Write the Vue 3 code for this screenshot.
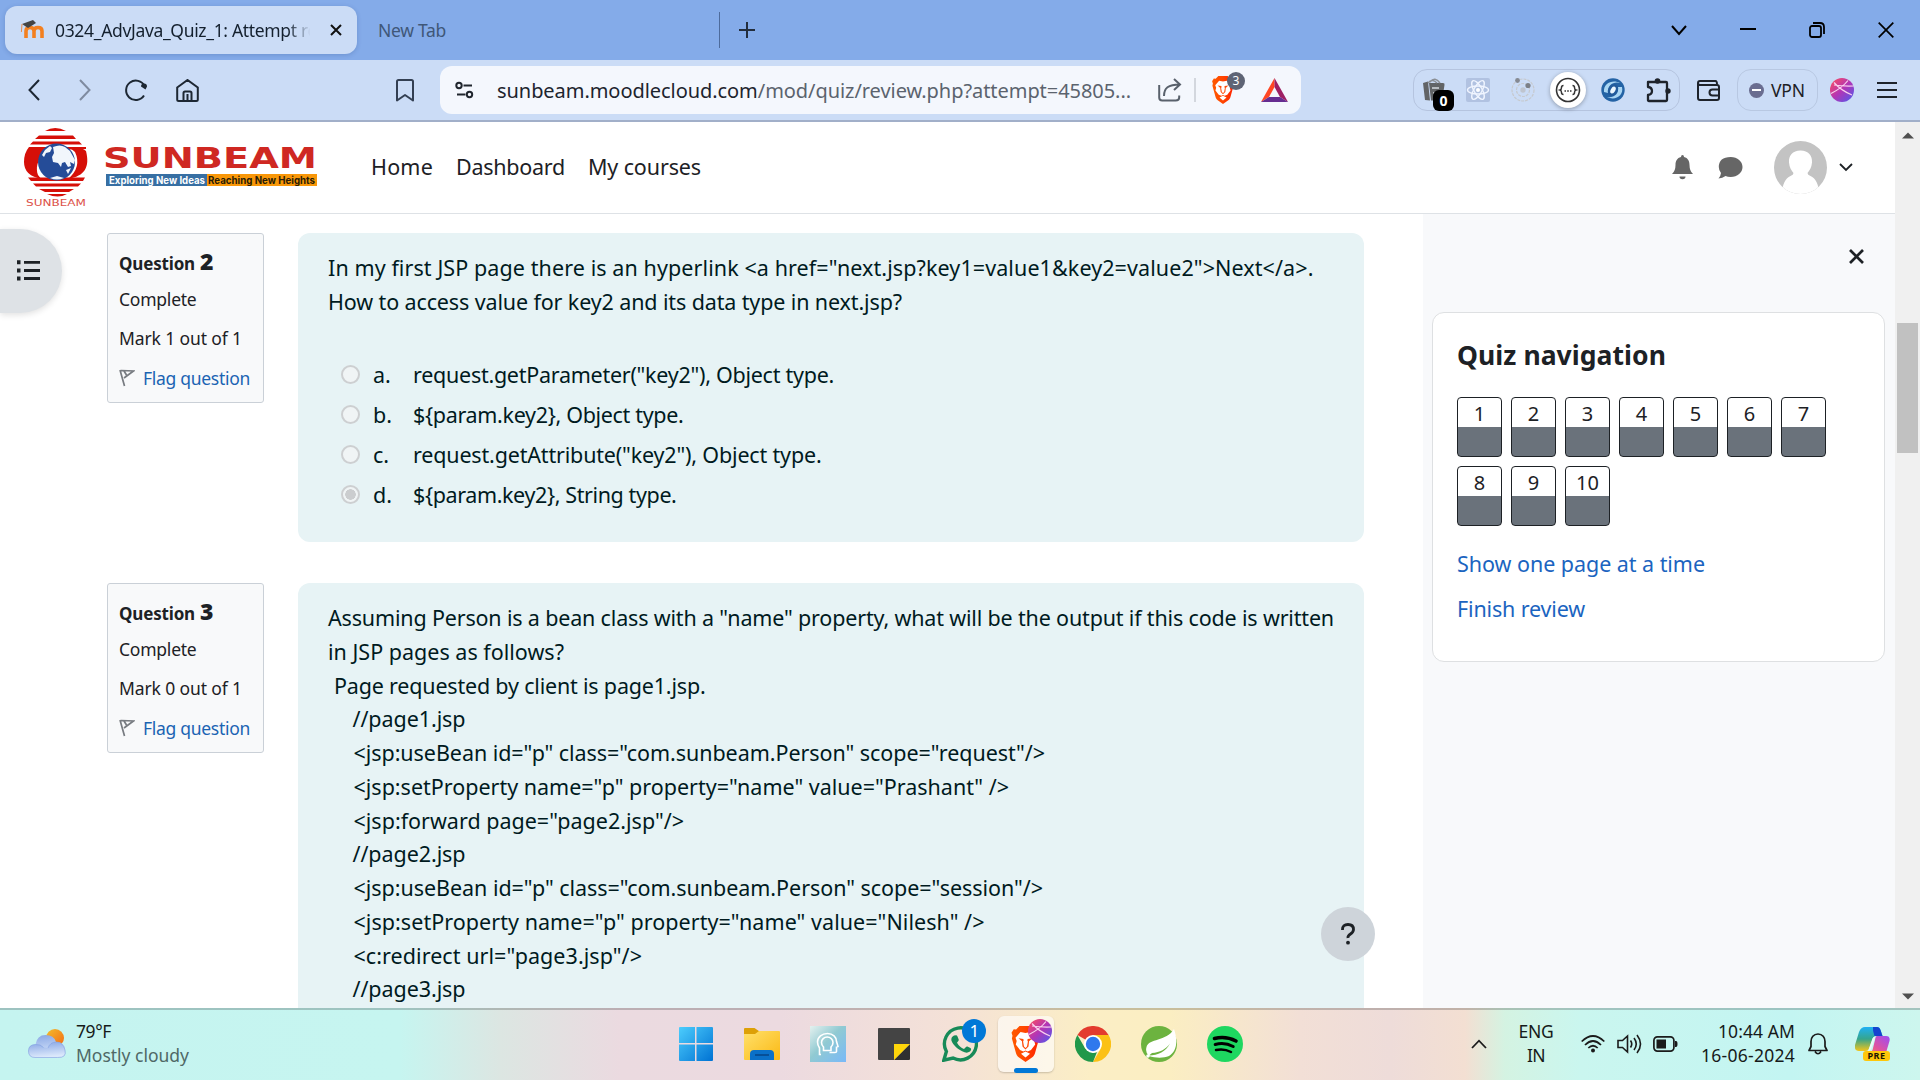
<script setup>
const vFit = {
  mounted(el, { value }) {
    const natural = el.getBoundingClientRect().width
    el.style.letterSpacing = (value - natural) / el.textContent.length + 'px'
  },
}

const questions = [
  {
    number: 2,
    mark: 'Mark 1 out of 1',
    lines: [
      { text: 'In my first JSP page there is an hyperlink <a href="next.jsp?key1=value1&key2=value2">Next</a>.', width: 985.5, indent: 0 },
      { text: 'How to access value for key2 and its data type in next.jsp?', width: 574, indent: 0 },
    ],
    options: [
      { letter: 'a.', text: 'request.getParameter("key2"), Object type.', width: 421 },
      { letter: 'b.', text: '${param.key2}, Object type.', width: 270.5 },
      { letter: 'c.', text: 'request.getAttribute("key2"), Object type.', width: 408.5 },
      { letter: 'd.', text: '${param.key2}, String type.', width: 263.5, checked: true },
    ],
  },
  {
    number: 3,
    mark: 'Mark 0 out of 1',
    lines: [
      { text: 'Assuming Person is a bean class with a "name" property, what will be the output if this code is written', width: 1006, indent: 0 },
      { text: 'in JSP pages as follows?', width: 236, indent: 0 },
      { text: 'Page requested by client is page1.jsp.', width: 371.5, indent: 6 },
      { text: '//page1.jsp', width: 113, indent: 24.5 },
      { text: '<jsp:useBean id="p" class="com.sunbeam.Person" scope="request"/>', width: 691.5, indent: 25.5 },
      { text: '<jsp:setProperty name="p" property="name" value="Prashant" />', width: 655.5, indent: 25.5 },
      { text: '<jsp:forward page="page2.jsp"/>', width: 330.5, indent: 25.5 },
      { text: '//page2.jsp', width: 113, indent: 24.5 },
      { text: '<jsp:useBean id="p" class="com.sunbeam.Person" scope="session"/>', width: 689.5, indent: 25.5 },
      { text: '<jsp:setProperty name="p" property="name" value="Nilesh" />', width: 631, indent: 25.5 },
      { text: '<c:redirect url="page3.jsp"/>', width: 288.5, indent: 25.5 },
      { text: '//page3.jsp', width: 113, indent: 24.5 },
    ],
    options: [],
  },
]
</script>

<template>
  <div class="screen">
    <svg class="defs" width="0" height="0">
      <defs>
        <linearGradient id="gBrave" x1="0" x2="1"><stop offset="0" stop-color="#ff5a00" /><stop offset=".5" stop-color="#ff4500" /><stop offset="1" stop-color="#ff2000" /></linearGradient>
        <linearGradient id="gSphere" x1="0" y1="0" x2="1" y2="1"><stop offset=".1" stop-color="#f24a6a" /><stop offset=".5" stop-color="#b335b5" /><stop offset="1" stop-color="#4a5cf0" /></linearGradient>
        <symbol id="brave" viewBox="0 0 28 36">
          <path d="M8 0h12l3.4 3.6 2.4-.4 2.2 3.6-1 3 .6 2.6-4.2 15.2c-.5 1.600-1.300 2.700-2.600 3.600L14 36l-6.800-4.800c-1.300-.9-2.100-2-2.600-3.600L.4 12.400 1 9.800l-1-3 2.200-3.600 2.400.4z" fill="url(#gBrave)" />
          <path d="M14 7l5-1 5 5.800-1.200 3.200.9 3.500-4.200 5.500-3.300 1.500L14 24.500l-2.200 1-3.300-1.500-4.200-5.500.9-3.500L4 11.800 9 6z" fill="#fff" />
          <path d="M14 25.500l4.500 2.200L14 31.500l-4.500-3.800z" fill="#fff" />
          <path d="M7 12.200l4.800.8.400 1.200-.6 1.300.9 5L14 22l1.500-1.500.9-5-.6-1.300.4-1.200 4.800-.8-3.200 2.800h-.2l-.6 5.500L14 23.500l-3-3-.6-5.500h-.2z" fill="#ff4a08" />
        </symbol>
        <symbol id="sphere" viewBox="0 0 24 24">
          <circle cx="12" cy="12" r="12" fill="url(#gSphere)" />
          <path d="M4 4.500q7 8 18 12.500M1 15.500Q12 10 18 2.500M4 7q10 1.500 19.500 1" fill="none" stroke="#f9cfee" stroke-width="1.200" />
        </symbol>
      </defs>
    </svg>

    <div class="tabs">
      <div class="tab">
        <svg class="favicon" width="25" height="20" viewBox="0 0 25 20"><path d="M6 18v-7q0-3.500 4-3.500t4 3.500v7M14 18v-7q0-3.500 4-3.500t4 3.500v7" fill="none" stroke="#f38020" stroke-width="3.600" /><path d="M2 4l11-4 3 3-8 5z" fill="#444" /><path d="M2 4l-.6 8" stroke="#e98b4a" /></svg>
        <div class="tab-title"><span v-fit="262">0324_AdvJava_Quiz_1: Attempt re</span></div>
        <svg class="tab-close" width="12" height="12" viewBox="0 0 12 12"><path d="M1 1l10 10M11 1L1 11" stroke="#111" stroke-width="2" /></svg>
      </div>
      <div class="tab-idle"><span v-fit="68">New Tab</span></div>
      <i class="tab-rule"></i>
      <svg class="plus" width="16" height="16" viewBox="0 0 16 16"><path d="M8 0v16M0 8h16" stroke="#222d3d" stroke-width="2" /></svg>
      <div class="win">
        <svg width="16" height="16" viewBox="0 0 16 16"><path d="M1 4l7 8 7-8" fill="none" stroke="#000" stroke-width="2" /></svg>
        <svg width="16" height="16" viewBox="0 0 16 16"><path d="M0 7h16" stroke="#000" stroke-width="2" /></svg>
        <svg width="16" height="16" viewBox="0 0 16 16"><rect x="1" y="4" width="11" height="11" rx="2" fill="none" stroke="#000" stroke-width="1.800" /><path d="M4 1h7q4 0 4 4v7" fill="none" stroke="#000" stroke-width="1.800" /></svg>
        <svg width="16" height="16" viewBox="0 0 16 16"><path d="M.7.7l14.600 14.600M15.300.7L.7 15.300" stroke="#000" stroke-width="1.700" /></svg>
      </div>
    </div>

    <div class="toolbar">
      <svg class="back" width="12" height="22" viewBox="0 0 12 22"><path d="M11 1L1.500 11 11 21" fill="none" stroke="#1d2733" stroke-width="2" /></svg>
      <svg class="fwd" width="12" height="22" viewBox="0 0 12 22"><path d="M1 1l9.500 10L1 21" fill="none" stroke="#7f8ba0" stroke-width="2" /></svg>
      <svg class="reload" width="24" height="24" viewBox="0 0 24 24"><path d="M20 17.500A9.700 9.700 0 1 1 20.500 8" fill="none" stroke="#1d2733" stroke-width="2" /><path d="M17 8.500a3 3 0 1 1 6 0l-1.500 3z" fill="#1d2733" /></svg>
      <svg class="home" width="23" height="23" viewBox="0 0 23 23"><path d="M1.200 8.500L11.500 1l10.300 7.500v12q0 1.500-1.500 1.500h-17.600q-1.500 0-1.500-1.500zM7.500 22v-8q0-1.500 1.500-1.500h5q1.500 0 1.500 1.500v8M11.500 15v6" fill="none" stroke="#1d2733" stroke-width="2" /></svg>
      <svg class="mark" width="18" height="23" viewBox="0 0 18 23"><path d="M1 2.500Q1 1 2.500 1h13Q17 1 17 2.500V21.500l-8-5.500-8 5.500z" fill="none" stroke="#333f52" stroke-width="2" stroke-linejoin="round" /></svg>
      <div class="url">
        <svg class="site" width="19" height="18" viewBox="0 0 19 18"><g fill="none" stroke="#20262e" stroke-width="2"><circle cx="4" cy="4.500" r="2.700" /><path d="M8.500 4.500H17M2 13.500h8.500" /><circle cx="14.500" cy="13.500" r="2.700" /></g></svg>
        <div class="address"><span v-fit="634">sunbeam.moodlecloud.com<em>/mod/quiz/review.php?attempt=45805...</em></span></div>
        <svg class="share" width="24" height="24" viewBox="0 0 24 24"><path d="M1.200 7v12.500q0 3 3 3h13.500q3.500 0 3.500-3V17.500M6 18C6 10 10 6.500 22 6.500M16 1l6 5.500-6 5.500" fill="none" stroke="#59616c" stroke-width="2" /></svg>
        <i class="url-rule"></i>
        <div class="shield"><svg width="22" height="28"><use href="#brave" /></svg><b>3</b></div>
        <svg class="bat" width="27" height="24" viewBox="0 0 27 24"><path d="M13.500 0L0 24l8-5 5.500-10z" fill="#ff4724" /><path d="M13.500 0L27 24l-8-5-5.500-10z" fill="#9e1f63" /><path d="M0 24h27l-8-5H8z" fill="#662d91" /></svg>
      </div>
      <div class="exts">
        <div class="bag"><svg width="24" height="25" viewBox="0 0 24 25"><path d="M1 5l5-1.500 2 19L3 22zM7 5h14q2 0 1.500 2L20 22.500H9z" fill="#626466" /><path d="M6 5q4-5 9 0M8 4q5-6 10 1" fill="none" stroke="#8b8f94" stroke-width="1.500" /><path d="M10 10h7M11 15h6" stroke="#b8bcc0" stroke-width="2" /></svg><b>0</b></div>
        <svg width="24" height="24" viewBox="0 0 24 24"><rect width="24" height="24" rx="2" fill="#b1c2e1" /><g fill="none" stroke="#f0f5ff" stroke-width="1.400"><ellipse cx="12" cy="12" rx="10.500" ry="4" /><ellipse cx="12" cy="12" rx="10.500" ry="4" transform="rotate(60 12 12)" /><ellipse cx="12" cy="12" rx="10.500" ry="4" transform="rotate(120 12 12)" /></g><circle cx="12" cy="12" r="2" fill="#fff" /></svg>
        <svg width="24" height="24" viewBox="0 0 24 24"><g fill="none" stroke="#c6c9ce" stroke-width="1.200" stroke-dasharray="3 1"><circle cx="12" cy="12" r="11" /><circle cx="12" cy="12" r="6.500" /></g><circle cx="12" cy="12" r="2.700" fill="#bfc5cf" /><circle cx="6.500" cy="2.500" r="2.400" fill="#858991" /><circle cx="17" cy="7.500" r="2.600" fill="#7c8087" /></svg>
        <div class="json"><svg width="26" height="26" viewBox="0 0 26 26"><circle cx="13" cy="13" r="11.500" fill="none" stroke="#333" stroke-width="1.600" /><path d="M8.500 8.500q-2 0-2 2t-1.500 2.500q1.500.5 1.500 2.500t2 2M17.500 8.500q2 0 2 2t1.500 2.500q-1.500.5-1.500 2.500t-2 2" fill="none" stroke="#333" stroke-width="1.500" /><path d="M9.500 14H11M12.200 14h1.600M15 14h1.500" stroke="#333" stroke-width="1.300" /></svg></div>
        <svg width="24" height="24" viewBox="0 0 24 24"><circle cx="12" cy="12" r="11.700" fill="#2463a5" /><path d="M3 14C2 5 12 1 19 5 13 3 6 7 7 15M21 9c2 9-7 14-15 10 7 1 12-3 11-10" fill="#a9d6f3" /><ellipse cx="12" cy="12" rx="3.500" ry="5" fill="#eaf6fd" stroke="#225b9b" stroke-width="2.500" transform="rotate(30 12 12)" /></svg>
        <svg width="25" height="25" viewBox="0 0 25 25"><path d="M2 4h18q1 0 1 1v17q0 1-1 1H3q-1 0-1-1v-5q4-.5 4-4T2 9z" fill="none" stroke="#1e232b" stroke-width="2.300" stroke-linejoin="round" /><circle cx="11.500" cy="3" r="2.800" fill="#1e232b" /><circle cx="22" cy="13" r="2.700" fill="#1e232b" /></svg>
      </div>
      <svg class="wallet" width="24" height="21" viewBox="0 0 24 21"><g fill="none" stroke="#1e232b" stroke-width="2"><path d="M1 3q0-2 2-2h15.500q1.500 0 1.500 3.500M1 3q0 2 2 2h17q2 0 2 2v11q0 2-2 2H3q-2 0-2-2z" /><path d="M22 9.500h-6.500q-3 0-3 3t3 3H22" /></g></svg>
      <div class="vpn"><i></i><span v-fit="34">VPN</span></div>
      <svg class="ball" width="24" height="24"><use href="#sphere" /></svg>
      <svg class="menu" width="20" height="16" viewBox="0 0 20 16"><path d="M0 1h20M0 8h20M0 15h20" stroke="#1e232b" stroke-width="1.800" /></svg>
    </div>

    <div class="page">
      <div class="site-main">
        <header class="nav">
          <svg class="logo" width="300" height="84" viewBox="20 125 300 84">
            <g fill="#d60f08">
              <path d="M45 131q10-6 21 0zM39 135.500h34l3 3.500H35zM33 141.500h46l3 3H30z" />
              <path d="M29 147h57v2l-20 .5C47 147 33 159 38 175q2 3 4 4-18-3-18-17 0-9 5-15z" />
              <path d="M86 151C90 167 85 176 68 179q14-12 7-27-3-3-6-4 13-1 17 3z" />
              <path d="M28 177.500h57l-2 3.500H31zM33 183.500h48l-3 3H36zM39 189h35l-5 3H45zM47 194h20q-9 5-20 0z" />
            </g>
            <circle cx="56.500" cy="162" r="18.500" fill="#254c98" />
            <path d="M45 150l5-4 2 2-2 4-4 1-2 4-2-2zM53 147q7-3 12 0l5 4 5 9-1 4-4-2 1 4-3 1-3-5-3 1-1 4-3-4-5-1-1-5 2-4zM66 170l5-2-3 6zM50 178q7 3 14 0l-7-2z" fill="#f1f6fc" />
            <text x="26" y="206" font-size="9.500" textLength="60" lengthAdjust="spacingAndGlyphs" fill="#dc5148" font-family="'DejaVu Sans', sans-serif">SUNBEAM</text>
            <text x="103" y="168" font-size="29" font-weight="700" textLength="214" lengthAdjust="spacingAndGlyphs" fill="#cf2822" font-family="'DejaVu Sans', sans-serif">SUNBEAM</text>
            <rect x="106" y="174" width="101" height="12" fill="#376fa3" /><rect x="207" y="174" width="110" height="12" fill="#f99708" />
            <text x="109" y="183.500" font-size="10" font-weight="700" textLength="96" lengthAdjust="spacingAndGlyphs" fill="#fff" font-family="Inter, sans-serif">Exploring New Ideas</text>
            <text x="208" y="183.500" font-size="10" font-weight="700" textLength="107" lengthAdjust="spacingAndGlyphs" fill="#2a1c05" font-family="Inter, sans-serif">Reaching New Heights</text>
          </svg>
          <nav class="links">
            <a v-fit="62">Home</a>
            <a v-fit="109">Dashboard</a>
            <a v-fit="113">My courses</a>
          </nav>
          <svg class="bell" width="21" height="25" viewBox="0 0 21 25"><path d="M10.500 0q1.500 0 1.500 2c4 1 5.500 4 5.500 8q0 6 3.500 9H0q3.500-3 3.500-9c0-4 1.500-7 5.500-8q0-2 1.500-2zM7.500 21.500h6a3 2.700 0 0 1-6 0z" fill="#666" /></svg>
          <svg class="chat" width="25" height="22" viewBox="0 0 25 22"><path d="M12.700 0C19.500 0 24.500 4.500 24.500 10S19.500 20 12.700 20q-3 0-5.200-.9Q4.500 21.500.5 21.500 2.700 19 3 16 .8 13.500.8 10 .8 0 12.700 0z" fill="#666" /></svg>
          <svg class="avatar" width="53" height="53" viewBox="0 0 53 53"><clipPath id="cAvatar"><circle cx="26.500" cy="26.500" r="26.500" /></clipPath><g clip-path="url(#cAvatar)"><rect width="53" height="53" fill="#c3c3c3" /><path d="M26.500 9.500c8 0 12 5 11.500 12-.4 5-2.500 8-4.500 10.500q0 2 3 3c5 2 8 8 9 18H7.500c1-10 4-16 9-18q3-1 3-3C17.500 29.500 15.400 26.500 15 21.500c-.5-7 3.500-12 11.500-12z" fill="#fff" /></g></svg>
          <svg class="caret" width="14" height="9" viewBox="0 0 14 9"><path d="M1 1l6 6 6-6" fill="none" stroke="#1d2125" stroke-width="1.800" /></svg>
        </header>

        <div class="body">
          <div class="left">
            <div class="toggle">
              <svg width="23" height="21" viewBox="0 0 23 21"><path d="M7 2.300h16M7 10.500h16M7 18.500h16" stroke="#1d2125" stroke-width="2.800" /><path d="M0 2.300h3.500M0 10.500h3.500M0 18.500h3.500" stroke="#1d2125" stroke-width="4" /></svg>
            </div>
          </div>
          <main class="questions">
            <section v-for="q in questions" :key="q.number" class="question">
              <aside class="info">
                <h3><span v-fit="76">Question</span><b>{{ q.number }}</b></h3>
                <p class="state"><span v-fit="77.5">Complete</span></p>
                <p class="grade"><span v-fit="123">{{ q.mark }}</span></p>
                <p class="flag"><svg width="16" height="18" viewBox="0 0 16 18"><path d="M1 1l4.500 16M2 1.500l12.500.5-9.500 7M5 2l2.500 4" fill="none" stroke="#777b80" stroke-width="1.700" /></svg><span v-fit="107">Flag question</span></p>
              </aside>
              <article class="formulation" :class="{ tall: !q.options.length }">
                <div v-for="(l, i) in q.lines" :key="i" class="line" :style="{ paddingLeft: l.indent + 'px' }"><span v-fit="l.width">{{ l.text }}</span></div>
                <div v-if="q.options.length" class="options">
                  <div v-for="o in q.options" :key="o.letter" class="option">
                    <i class="radio" :class="{ on: o.checked }"></i><span class="letter">{{ o.letter }}</span><span v-fit="o.width">{{ o.text }}</span>
                  </div>
                </div>
              </article>
            </section>
          </main>
          <aside class="drawer">
            <svg class="close" width="15" height="15" viewBox="0 0 15 15"><path d="M1 1l13 13M14 1L1 14" stroke="#1d2125" stroke-width="2.700" /></svg>
            <div class="card">
              <h2><span v-fit="209">Quiz navigation</span></h2>
              <div class="cells"><a v-for="n in 10" :key="n" class="cell"><span>{{ n }}</span></a></div>
              <a class="link"><span v-fit="248">Show one page at a time</span></a>
              <a class="link"><span v-fit="128">Finish review</span></a>
            </div>
          </aside>
        </div>
      </div>
      <div class="scroll">
        <svg width="12" height="7" viewBox="0 0 12 7"><path d="M0 6.500L6 .5l6 6z" fill="#505050" /></svg>
        <i class="thumb"></i>
        <svg width="12" height="7" viewBox="0 0 12 7"><path d="M0 .5l6 6 6-6z" fill="#505050" /></svg>
      </div>
      <div class="help"><svg width="14" height="22" viewBox="0 0 14 22"><path d="M1.500 7V6.500Q1.500 1.500 7 1.500T12.500 6.500Q12.500 9 9.500 11T7 15" fill="none" stroke="#1d2125" stroke-width="2.800" /><circle cx="7" cy="19.700" r="1.900" fill="#1d2125" /></svg></div>
    </div>

    <footer class="taskbar">
      <div class="weather">
        <svg width="38" height="32" viewBox="0 0 38 32"><defs><linearGradient id="gSun" x1="0" y1="0" x2="1" y2="1"><stop offset="0" stop-color="#f3bd2c" /><stop offset="1" stop-color="#f36a16" /></linearGradient><linearGradient id="gCloud" x1="0" y1="0" x2=".2" y2="1"><stop offset="0" stop-color="#86a5e4" /><stop offset="1" stop-color="#dbe8fb" /></linearGradient></defs><circle cx="27" cy="10" r="9" fill="url(#gSun)" /><path d="M7 29.500q-6.500 0-6.500-6.500T7.500 16.500Q9 7 17.500 7T28 14q9 0 9 8t-7.500 7.500z" fill="url(#gCloud)" /><path d="M20 20q2-6 8.500-6T37 22t-7.500 7.500H7Q.5 29.500.5 23T7.500 16.500q5-.5 8 3" fill="url(#gCloud)" stroke="#7f9fe0" stroke-width=".6" /></svg>
        <div class="stack start"><span v-fit="35">79°F</span><span v-fit="113" class="dim">Mostly cloudy</span></div>
      </div>
      <div class="apps">
        <svg width="36" height="36" viewBox="0 0 36 36"><defs><linearGradient id="gWin" x1="0" y1="0" x2="1" y2="1" gradientUnits="objectBoundingBox"><stop offset="0" stop-color="#4ccdfd" /><stop offset="1" stop-color="#0072d3" /></linearGradient></defs><path d="M2 1h15v16H1V2q0-1 1-1zM18.500 1H34q1 0 1 1v15H18.500zM1 18.500h16V35H2q-1 0-1-1zM18.500 18.500H35V34q0 1-1 1H18.500z" fill="url(#gWin)" /></svg>
        <svg width="36" height="36" viewBox="0 0 36 36"><defs><linearGradient id="gFolder" x1="0" y1="0" x2="1" y2="1"><stop offset="0" stop-color="#ffe06b" /><stop offset="1" stop-color="#fbb914" /></linearGradient></defs><path d="M0 3q0-1 1-1h9.500l5 3.500v7H0z" fill="#dda007" /><path d="M0 8h11l4-3h20q1 0 1 1v27q0 1-1 1H1q-1 0-1-1z" fill="url(#gFolder)" /><path d="M6 34V28q0-4 4-4h16q4 0 4 4v6z" fill="#0a70c8" /><path d="M11 29h14" stroke="#064c91" stroke-width="1.800" /></svg>
        <svg width="36" height="36" viewBox="0 0 36 36"><defs><linearGradient id="gHead" x1="0" y1="0" x2="1" y2="1"><stop offset="0" stop-color="#e5f1ef" /><stop offset=".45" stop-color="#91cad2" /><stop offset="1" stop-color="#79b9f8" /></linearGradient></defs><path d="M0 0h36v36H0z" fill="url(#gHead)" /><path d="M11 28.500H9.500V22Q7.500 19 7.500 16C7.500 11 12 7.500 17.500 7.500S26.500 11 26.500 15.500l1.500 5-1.500.5v4.500q0 1-1.500 1h-5.500M13.500 24.500v-3.500Q11.500 19 11.500 16.500c0-3 2.500-5.500 5.700-5.500S23 13.500 23 16.500q0 2.500-2 4.500v3.500z" fill="none" stroke="#fff" stroke-width="1.600" /></svg>
        <svg width="36" height="36" viewBox="0 0 36 36"><path d="M3 2h30q1 0 1 1v15L18 34H3q-1 0-1-1V3q0-1 1-1z" fill="#444" /><path d="M18 34l16-16v15q0 1-1 1z" fill="#303030" /><path d="M18 18h16L18 34z" fill="#ffd60a" /></svg>
        <div class="wa"><svg width="36" height="36" viewBox="0 0 36 36"><path d="M1.800 34.200l2.600-8.700A16 16 0 1 1 11 32z" fill="none" stroke="#178a58" stroke-width="3.400" /><path d="M12 9.500l2-.2q1 0 1.500 1.200l1.200 3q.3.800-.4 1.500l-1.300 1.700q2.500 4.500 7 6.200l2-2q.6-.6 1.400-.3l3 1.500q1 .5.700 1.500c-.6 3-4 3.500-6.500 2.700C16 24 11 19 9.400 14.500q-.6-3.500 2.600-5z" fill="#178a58" /></svg><b>1</b></div>
        <div class="active"><svg class="lion" width="29" height="36"><use href="#brave" /></svg><svg class="orb" width="24" height="24"><use href="#sphere" /></svg><i></i></div>
        <svg width="36" height="36" viewBox="0 0 36 36"><path d="M18 18L2.400 9A18 18 0 0 1 33.600 9z" fill="#e33b2e" /><path d="M18 9h15.600A18 18 0 0 1 18 36l7.800-13.500z" fill="#fbc116" /><path d="M2.400 9l7.800 13.500L18 27l4-1-4 10A18 18 0 0 1 2.400 9z" fill="#21984a" /><circle cx="18" cy="18" r="9" fill="#fff" /><circle cx="18" cy="18" r="7.200" fill="#2f78ed" /></svg>
        <svg width="36" height="36" viewBox="0 0 36 36"><circle cx="18" cy="18" r="18" fill="#6cb33f" /><path d="M33 3c4 12 3 22-5 27-6 2.500-14 2-20 0Q4 27 5.500 21C8 12 25 16 33 3z" fill="#fff" /><path d="M8 29.500c9 0 17-4 21-12-4 5.500-10 9-18 9.500" fill="#6cb33f" /><circle cx="7" cy="30" r="1.800" fill="#fff" /></svg>
        <svg width="36" height="36" viewBox="0 0 36 36"><circle cx="18" cy="18" r="18" fill="#1ed760" /><g fill="none" stroke="#000" stroke-linecap="round"><path d="M7.500 12.500q11-3 21.500 2.500" stroke-width="3.600" /><path d="M8.200 18.500q9.500-2.500 18 2" stroke-width="3" /><path d="M9 24q8-1.800 15 2" stroke-width="2.500" /></g></svg>
      </div>
      <div class="tray">
        <svg width="16" height="10" viewBox="0 0 16 10"><path d="M1 9l7-7.300L15 9" fill="none" stroke="#1b1b1b" stroke-width="1.800" /></svg>
        <div class="stack lang"><span v-fit="35">ENG</span><span v-fit="18">IN</span></div>
        <svg class="wifi" width="24" height="18" viewBox="0 0 24 18"><g fill="none" stroke="#1b1b1b" stroke-width="1.700"><path d="M.7 6.500Q12-4.500 23.300 6.500M4 10q8-8 16 0M7.300 13q4.700-4.500 9.400 0" /></g><circle cx="12" cy="15.500" r="2" fill="#1b1b1b" /></svg>
        <svg class="vol" width="25" height="20" viewBox="0 0 25 20"><g fill="none" stroke="#1b1b1b" stroke-width="1.600"><path d="M1 6.500h4.500L10.500 2v16l-5-4.500H1zM13.500 6.500q2.500 3.500 0 7M17 4q4.500 6 0 12M20 1q7 9 0 18" /></g></svg>
        <svg class="batt" width="25" height="16" viewBox="0 0 25 16"><rect x=".9" y=".9" width="20" height="14.200" rx="3.500" fill="none" stroke="#1b1b1b" stroke-width="1.700" /><path d="M3.500 3.500H13v9H3.500zM22 5h1q1.500 0 1.500 3T23 11h-1z" fill="#1b1b1b" /></svg>
        <div class="stack clock"><span v-fit="77">10:44 AM</span><span v-fit="94">16-06-2024</span></div>
        <svg class="tbell" width="20" height="22" viewBox="0 0 20 22"><path d="M10 1c4.500 0 7 3.500 7 7.500v5l2 4H1l2-4v-5C3 4.500 5.500 1 10 1zM7 18.500q3 4.500 6 0" fill="none" stroke="#1b1b1b" stroke-width="1.700" stroke-linejoin="round" /></svg>
        <div class="copilot">
          <svg width="35" height="30" viewBox="0 0 35 30"><defs><linearGradient id="gCopA" x1="0" y1="0" x2="0" y2="1"><stop offset="0" stop-color="#1fb0f4" /><stop offset=".5" stop-color="#36a58c" /><stop offset="1" stop-color="#f3c51a" /></linearGradient><linearGradient id="gCopB" x1="1" y1="0" x2="0" y2="1"><stop offset="0" stop-color="#9c4cf5" /><stop offset=".55" stop-color="#e0529f" /><stop offset="1" stop-color="#ff8a4a" /></linearGradient></defs><path d="M10 0h12q2.500 0 3.500 3l2 6h-6q-3 0-4 3l-3 9q-1 3-4 3H4q-5 0-4-6L4 5q2-5 6-5z" fill="url(#gCopA)" /><path d="M18 0h4q2.500 0 3.500 3l2 6h-8q-2-5-1.500-9z" fill="#1543cf" /><path d="M22 9h9q4.500 0 3.500 5l-3 10q-1 4-5 4H9q7-1 8.500-5l2.500-10q.5-4 2-4z" fill="url(#gCopB)" /><path d="M20.500 9.500L16 22q-1 2-3 2l4.500-12.500q1-2 3-2z" fill="#e9fbf8" /></svg>
          <b>PRE</b>
        </div>
      </div>
    </footer>
  </div>
</template>

<style>
body { margin: 0; overflow: hidden; }
</style>

<style scoped>
* { box-sizing: border-box; }
.screen { width: 1920px; height: 1080px; overflow: hidden; display: flex; flex-direction: column; background: #fff; color: #1d2125; font-family: "Noto Sans", sans-serif; font-size: 21.5px; white-space: nowrap; }
.defs { position: absolute; }
svg { display: block; flex: none; }
span, a { display: inline-block; }
h2, h3, p { margin: 0; }

.tabs { height: 60px; background: #84abe9; display: flex; align-items: center; flex: none; font-size: 17.5px; }
.tab { width: 352px; height: 48px; margin-left: 5px; border-radius: 12px; background: #cbdcf6; display: flex; align-items: center; box-shadow: 0 1px 4px rgba(40, 70, 130, .25); }
.favicon { margin-left: 15px; }
.tab-title { width: 258px; margin-left: 10px; margin-top: -1px; overflow: hidden; color: #14202e; -webkit-mask-image: linear-gradient(90deg, #000 90%, transparent 99%); mask-image: linear-gradient(90deg, #000 90%, transparent 99%); }
.tab-close { margin-left: 17px; }
.tab-idle { margin-left: 21px; margin-top: -1px; width: 341px; color: #3f5778; }
.tab-rule { width: 1px; height: 36px; background: #4d6b9c; }
.plus { margin-left: 19px; }
.win { margin-left: auto; margin-right: 26px; display: flex; gap: 53px; }

.toolbar { height: 62px; flex: none; background: #cbdcf6; border-bottom: 2px solid #a1afc9; display: flex; align-items: center; }
.back { margin-left: 28px; }
.fwd { margin-left: 39px; }
.reload { margin-left: 33px; }
.home { margin-left: 28px; }
.mark { margin-left: 197px; }
.url { width: 861px; height: 48px; margin-left: 26px; border-radius: 12px; background: #f4f7fd; display: flex; align-items: center; font-size: 20px; }
.site { margin-left: 15px; }
.address { margin-left: 23px; width: 661px; color: #1d242e; }
.address em { font-style: normal; color: #5b636e; }
.url-rule { width: 2px; height: 24px; margin-left: 12px; background: #d3d7de; }
.shield { position: relative; margin-left: 16px; }
.shield b { position: absolute; left: 15px; top: -4px; width: 18px; height: 18px; border-radius: 9px; background: #5e6475; color: #fff; font-size: 12px; line-height: 18px; font-weight: 400; text-align: center; }
.bat { margin-left: 27px; }
.exts { width: 267px; height: 42px; margin-left: 112px; border: 1px solid #b5c4df; border-radius: 14px; display: flex; align-items: center; padding-left: 8px; }
.exts > * { flex: none; margin-right: 21px; }
.exts > .bag { position: relative; margin-right: 20px; }
.bag b { position: absolute; left: 11px; top: 12px; width: 21px; height: 21px; border-radius: 6px; background: #000; color: #fff; font-size: 14px; line-height: 21px; text-align: center; }
.exts > .json { width: 36px; height: 36px; margin: 0 15px 0 -6px; border-radius: 50%; background: #fff; display: grid; place-items: center; box-shadow: 0 1px 4px rgba(0, 0, 0, .3); }
.wallet { margin-left: 17px; }
.vpn { width: 81px; height: 42px; margin-left: 16px; border: 1px solid #b8c8e2; border-radius: 14px; display: flex; align-items: center; font-size: 17.500px; }
.vpn i { width: 15px; height: 15px; margin: 0 7px 0 11px; border-radius: 50%; background: linear-gradient(#fff, #fff) center / 9px 2px no-repeat #6a6d90; }
.vpn span { margin-top: -1px; }
.ball { margin-left: 12px; }
.menu { margin-left: 23px; }

.page { height: 886px; flex: none; display: flex; position: relative; overflow: hidden; }
.site-main { width: 1895px; display: flex; flex-direction: column; }
.nav { height: 92px; flex: none; border-bottom: 1px solid #dee2e6; display: flex; align-items: center; }
.logo { margin: -2px 0 0 20px; }
.links { margin: -2px 0 0 51px; width: 1301px; display: flex; gap: 23px; }
.chat { margin-left: 25px; }
.avatar { margin-left: 31px; }
.caret { margin-left: 12px; }
.body { display: flex; height: 794px; }
.left { width: 107px; }
.toggle { width: 62px; height: 84px; margin-top: 15px; border-radius: 0 42px 42px 0; background: #dee2e6; display: flex; align-items: center; padding: 0 0 2px 17px; box-shadow: 0 2px 6px rgba(0, 0, 0, .12); }
.questions { width: 1316px; padding-top: 19px; }
.question { display: flex; align-items: flex-start; height: 350px; }
.info { width: 157px; height: 170px; border: 1px solid #cad0d7; border-radius: 3px; background: #f8f9fa; padding: 12px 0 0 11px; font-size: 17.500px; line-height: 28px; }
.info h3 { display: flex; align-items: baseline; font-size: 17px; font-weight: 700; line-height: 30px; gap: 5px; }
.info h3 b { font-size: 23px; line-height: 30px; }
.state { margin-top: 6px; }
.grade { margin-top: 11px; }
.flag { margin-top: 12px; display: flex; align-items: center; gap: 8px; color: #1b64b3; }
.formulation { width: 1066px; height: 309px; margin-left: 34px; border-radius: 12px; background: #e7f3f5; color: #001a1e; padding: 18px 0 0 30px; line-height: 33.750px; flex: none; }
.formulation.tall { height: 460px; }
.line { height: 33.750px; }
.options { margin-top: 36px; }
.option { height: 40px; line-height: 40px; display: flex; }
.radio { width: 19px; height: 19px; margin: 10px 13px 0 13px; border: 2px solid #cdcfd1; border-radius: 50%; background: #f0f4f5; }
.radio.on { background: radial-gradient(circle, #cbcdcf 5px, #f0f4f5 5.500px); }
.letter { width: 40px; }

.drawer { width: 472px; background: #f8f9fb; padding: 35px 10px 0 9px; }
.close { margin-left: 417px; }
.card { width: 453px; height: 350px; margin-top: 48px; border: 1px solid #dee0e2; border-radius: 12px; background: #fff; padding: 24px 0 0 24px; }
.card h2 { font-size: 26.500px; font-weight: 700; line-height: 36px; }
.cells { display: flex; flex-wrap: wrap; gap: 9px; width: 390px; margin: 24px 0 21px; }
.cell { width: 45px; height: 60px; border: 1px solid #1d2125; border-radius: 4px; background: linear-gradient(#fff 29px, #6a727b 29px); text-align: center; font-size: 20px; line-height: 32px; }
.link { display: block; height: 45px; line-height: 34px; color: #1b64c0; }

.scroll { width: 25px; background: #f0f0f0; display: flex; flex-direction: column; align-items: center; padding: 10px 0 8px; }
.thumb { width: 21px; height: 130px; margin: 184px 0 auto; background: #c1c1c1; }
.help { position: absolute; left: 1321px; top: 785px; width: 54px; height: 54px; border-radius: 50%; background: #ced4da; display: grid; place-items: center; }

.taskbar { height: 72px; flex: none; display: flex; align-items: center; padding-bottom: 2px; border-top: 2px solid rgba(0, 0, 0, .2); background: linear-gradient(90deg, #c5f4f0 0, #c6f5f0 400px, #dce6e2 500px, #ebdae0 620px, #ecdae0 780px, #f4e1d7 950px, #fbeec5 1090px, #fbeec2 1170px, #f2dfd6 1300px, #eedcd9 1390px, #f3dfd2 1465px, #d4f3e2 1505px, #caf6ef 1580px, #c3f5f2 1790px, #cdf6ee 1920px); background-origin: border-box; color: #161a1a; font-size: 17.500px; }
.stack { display: flex; flex-direction: column; line-height: 24px; margin-top: -2px; }
.weather { width: 677.500px; padding-left: 28px; display: flex; align-items: center; gap: 10px; }
.start { align-items: flex-start; }
.dim { color: #4f6866; }
.apps { width: 793.500px; display: flex; align-items: center; gap: 30.200px; }
.wa { position: relative; }
.wa b { position: absolute; left: 20px; top: -7px; width: 24px; height: 24px; border-radius: 50%; background: #0078d7; color: #fff; font-size: 17px; font-weight: 400; line-height: 24px; text-align: center; }
.active { position: relative; width: 56px; height: 56px; margin: 0 -10px; border-radius: 6px; background: rgba(255, 255, 255, .6); box-shadow: 0 1px 2px rgba(0, 0, 0, .2); }
.lion { position: absolute; left: 13px; top: 10px; }
.orb { position: absolute; left: 30px; top: 3px; }
.active i { position: absolute; left: 16px; bottom: -1px; width: 24px; height: 5px; border-radius: 3px; background: #0078d7; }
.tray { display: flex; align-items: center; }
.lang { width: 62px; margin-left: 18px; align-items: center; }
.wifi { margin-left: 14px; }
.vol { margin-left: 12px; }
.batt { margin-left: 11px; }
.clock { width: 117px; align-items: flex-end; }
.tbell { margin-left: 13px; }
.copilot { position: relative; margin-left: 27px; width: 35px; height: 34px; }
.copilot b { position: absolute; left: 8px; bottom: 0; width: 27px; height: 10px; border-radius: 3px; background: #fec70b; color: #1c1600; font-size: 9px; line-height: 10px; text-align: center; letter-spacing: .5px; }
</style>
